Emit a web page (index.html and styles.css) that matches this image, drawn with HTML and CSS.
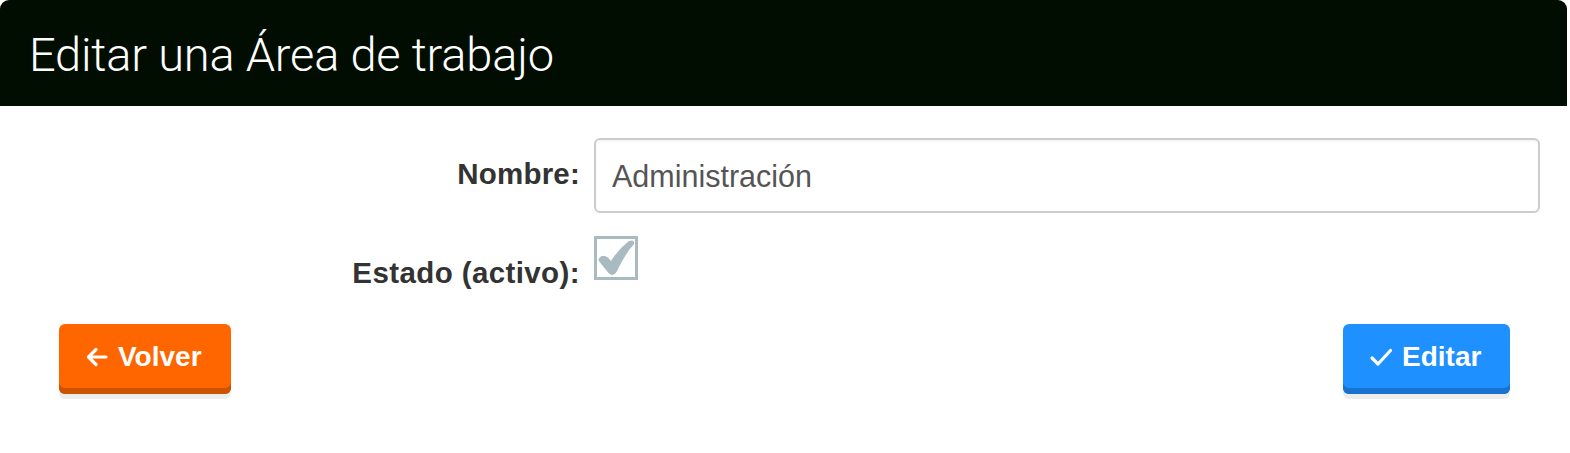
FILE: index.html
```html
<!DOCTYPE html>
<html lang="es">
<head>
<meta charset="utf-8">
<title>Editar una Área de trabajo</title>
<link rel="stylesheet" href="styles.css">
</head>
<body>
<div class="modal">
  <header class="modal-header">
    <h1 class="modal-title">Editar una Área de trabajo</h1>
  </header>
  <form class="form">
    <div class="row">
      <label class="label" for="nombre">Nombre:</label>
      <input class="input" id="nombre" type="text" value="Administración">
    </div>
    <div class="row row-check">
      <label class="label label-check">Estado (activo):</label>
      <span class="checkbox">
        <svg viewBox="0 0 38 38" width="38" height="38"><path d="M1.5 20 Q5 14.5 11 18.5 L14 22 Q21.5 10 32 2 Q37.5 0 37 5 Q28 15 19.5 33 Q16 38.5 11.5 34 L3 23.5 Q1 21.5 1.5 20 Z" fill="#a9bbc0"/></svg>
      </span>
    </div>
    <div class="actions">
      <button type="button" class="btn btn-orange">
        <svg class="ico" viewBox="0 0 24 24" width="24" height="24"><path d="M21 12H4M11 4.5L3.5 12L11 19.5" fill="none" stroke="#fff" stroke-width="3.2" stroke-linecap="round" stroke-linejoin="round"/></svg>
        <span>Volver</span>
      </button>
      <button type="button" class="btn btn-blue">
        <svg class="ico" viewBox="0 0 24 24" width="24" height="24"><path d="M3 13L9 19L21.5 5.5" fill="none" stroke="#fff" stroke-width="3.2" stroke-linecap="round" stroke-linejoin="round"/></svg>
        <span>Editar</span>
      </button>
    </div>
  </form>
</div>
</body>
</html>
```
FILE: styles.css
```css
html, body {
  margin: 0;
  padding: 0;
  background: #ffffff;
}
body {
  font-family: "Liberation Sans", Arial, Helvetica, sans-serif;
  width: 1570px;
  height: 453px;
  overflow: hidden;
}
.modal {
  width: 1570px;
}
.modal-header {
  background: #000d00;
  height: 106px;
  margin-right: 3px;
  border-radius: 9px 9px 0 0;
  display: flex;
  align-items: center;
  padding-left: 29px;
  box-sizing: border-box;
}
.modal-title {
  margin: 0;
  font-family: Roboto, "Liberation Sans", sans-serif;
  font-weight: 300;
  font-size: 47px;
  color: #ffffff;
  letter-spacing: -0.2px;
  line-height: 1;
  padding-top: 2px;
}
.form {
  padding: 32px 30px 0 0;
}
.row {
  display: grid;
  grid-template-columns: 580px 1fr;
  column-gap: 14px;
  align-items: center;
}
.row-check {
  margin-top: 23px;
  align-items: start;
}
.label {
  text-align: right;
  font-weight: bold;
  font-size: 29.5px;
  color: #333333;
  letter-spacing: 0.2px;
  padding-bottom: 4px;
}
.label-check {
  padding-top: 20px;
  letter-spacing: 0.4px;
}
.input {
  height: 75px;
  box-sizing: border-box;
  border: 2px solid #cccccc;
  border-radius: 6px;
  padding: 2px 16px 0;
  font-family: "Liberation Sans", Arial, sans-serif;
  font-size: 30.5px;
  color: #555555;
  background: #fff;
  box-shadow: inset 0 2px 2px rgba(0,0,0,0.04);
}
.checkbox {
  width: 44px;
  height: 44px;
  box-sizing: border-box;
  border: 3px solid #a9bbc0;
  display: flex;
  align-items: center;
  justify-content: center;
  background: #fff;
}
.actions {
  display: flex;
  justify-content: space-between;
  padding: 0 30px 0 59px;
  margin-top: 30px;
}
.btn {
  display: flex;
  align-items: center;
  gap: 9px;
  height: 70px;
  box-sizing: border-box;
  border: none;
  border-radius: 6px;
  font-family: "Liberation Sans", Arial, sans-serif;
  font-weight: bold;
  font-size: 28px;
  color: #ffffff;
  padding: 0 28px 0 26px;
  cursor: pointer;
}
.btn-orange {
  background: #ff6600;
  box-shadow: inset 0 -6px 0 #cc5200, 0 5px 0 #ededed;
  width: 172px;
}
.btn-blue {
  background: #1e90ff;
  box-shadow: inset 0 -6px 0 #1a72d0, 0 5px 0 #ededed;
  width: 167px;
}
.btn span {
  padding-bottom: 4px;
}
.ico {
  display: block;
  margin-bottom: 4px;
}
```
